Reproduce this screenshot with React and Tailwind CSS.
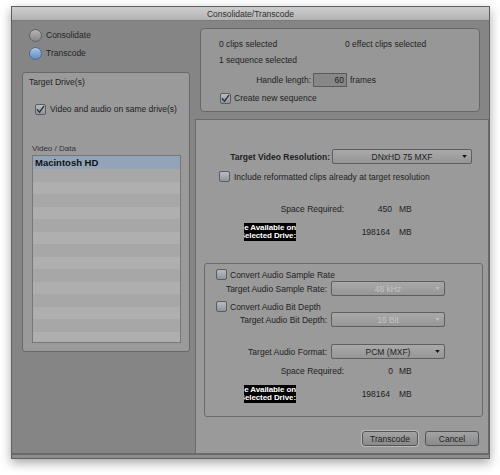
import React from 'react'

// ── Avid-style Consolidate/Transcode dialog ──
const FONT = { fontFamily: '"Liberation Sans", Arial, sans-serif' }

function Check({ checked }) {
  return (
    <div className="w-[11px] h-[11px] shrink-0 rounded-[2px] border border-[#5c5c5c] bg-gradient-to-b from-[#b8bcc4] to-[#8f949c] flex items-center justify-center">
      {checked && (
        <svg viewBox="0 0 10 10" className="w-[9px] h-[9px]">
          <path d="M1.5 5.2 L4 8 L8.6 1.6" fill="none" stroke="#2b3440" strokeWidth="1.6" strokeLinecap="round" strokeLinejoin="round" />
        </svg>
      )}
    </div>
  )
}

function Radio({ on, label }) {
  return (
    <div className="flex items-center h-[18px]">
      <div
        className={`w-[13px] h-[13px] rounded-full border ${
          on
            ? 'border-[#4a6a90] bg-gradient-to-b from-[#a9c6e6] to-[#5f8dc0]'
            : 'border-[#626262] bg-gradient-to-b from-[#b4b4b4] to-[#888888]'
        }`}
      />
      <span className="ml-[4px] text-[#262626]">{label}</span>
    </div>
  )
}

function Select({ value, width, disabled }) {
  return (
    <div className={`relative flex items-center justify-center h-[15px] rounded-[2px] border border-[#5e5e5e] bg-gradient-to-b from-[#a9a9a9] to-[#969696] ${width}`}>
      <span className={disabled ? 'text-[#c4c4c4]' : 'text-[#1e1e1e]'}>{value}</span>
      <svg viewBox="0 0 6 4" className="absolute right-[4px] top-[5px] w-[5px] h-[3px]">
        <path d="M0 0 H6 L3 4 Z" fill={disabled ? '#bdbdbd' : '#111'} />
      </svg>
    </div>
  )
}

// label that is too long for its black box, cut on the left like the original
function BlackLabel() {
  return (
    <div className="w-[52px] h-[18px] bg-black overflow-hidden flex flex-col items-end justify-center font-bold text-white leading-[8.5px] text-[8px] tracking-[-0.1px] whitespace-nowrap">
      <span>Space Available on</span>
      <span>Selected Drive:</span>
    </div>
  )
}

export default function App() {
  const rows = Array.from({ length: 14 })

  return (
    <div className="w-[500px] h-[475px] bg-white overflow-hidden" style={FONT}>
      <div className="ml-[11px] mt-[6px] w-[479px] h-[453px] flex flex-col border border-[#5f5f5f] bg-[#858585] text-[8.5px] leading-[10px] text-[#222] shadow-[0_4px_10px_rgba(0,0,0,0.35)]">

        {/* title bar */}
        <div className="h-[14px] shrink-0 flex items-center justify-center border-b border-[#7a7a7a] bg-gradient-to-b from-[#cdcdcd] to-[#b3b3b3] text-[#2f2f2f]">
          Consolidate/Transcode
        </div>

        <div className="flex flex-1 min-h-0">
          {/* left column */}
          <div className="w-[183px] shrink-0 flex flex-col">
            <div className="pl-[17px] pt-[5px]">
              <Radio label="Consolidate" />
              <Radio on label="Transcode" />
            </div>

            <div className="ml-[10px] mt-[10px] w-[168px] h-[280px] rounded-[3px] border border-[#686868] bg-[#9a9a9a]">
              <div className="pl-[6px] pt-[4px]">Target Drive(s)</div>
              <div className="mt-[16px] pl-[12px] flex items-center gap-[4px] h-[12px]">
                <Check checked />
                <span>Video and audio on same drive(s)</span>
              </div>
              <div className="mt-[29px] pl-[9px] text-[8px] text-[#333]">Video / Data</div>
              <div className="ml-[9px] mt-[1px] w-[149px] h-[188px] border border-[#777] overflow-hidden">
                <div className="h-[13px] bg-[#93a4b9] flex items-center pl-[2px] font-bold text-[9.5px] text-[#111]">
                  Macintosh HD
                </div>
                {rows.map((_, i) => (
                  <div key={i} className={`h-[12.5px] ${i % 2 === 0 ? 'bg-[#a7a7a7]' : 'bg-[#afafaf]'}`} />
                ))}
              </div>
            </div>
          </div>

          {/* right column */}
          <div className="flex-1 flex flex-col">
            <div className="ml-[5px] mt-[7px] w-[280px] h-[84px] shrink-0 rounded-[4px] border border-[#666] bg-[#979797]">
              <div className="pl-[18px] pt-[10px] flex">
                <span className="w-[126px]">0 clips selected</span>
                <span>0 effect clips selected</span>
              </div>
              <div className="pl-[18px] mt-[6px]">1 sequence selected</div>
              <div className="pl-[18px] mt-[8px] flex items-center">
                <span className="w-[92px] text-right">Handle length:</span>
                <div className="ml-[2px] w-[34px] h-[14px] border border-[#5a5a5a] bg-[#878787] flex items-center justify-end pr-[2px]">60</div>
                <span className="ml-[3px]">frames</span>
              </div>
              <div className="pl-[19px] mt-[5px] flex items-center gap-[3px] h-[12px]">
                <Check checked />
                <span>Create new sequence</span>
              </div>
            </div>

            {/* lower panel */}
            <div className="mt-[7px] flex-1 flex flex-col border-t border-l border-r border-[#6a6a6a] bg-[#9a9a9a]">
              <div className="mt-[29px] flex items-center">
                <span className="w-[134px] text-right font-bold">Target Video Resolution:</span>
                <div className="ml-[2px]"><Select value="DNxHD 75  MXF" width="w-[140px]" /></div>
              </div>
              <div className="mt-[7px] pl-[23px] flex items-center gap-[4px]">
                <Check />
                <span>Include reformatted clips already at target resolution</span>
              </div>
              <div className="mt-[22px] flex">
                <span className="w-[148px] text-right">Space Required:</span>
                <span className="w-[48px] text-right">450</span>
                <span className="ml-[7px]">MB</span>
              </div>
              <div className="mt-[9px] flex items-center">
                <div className="w-[100px] flex justify-end"><BlackLabel /></div>
                <span className="w-[94px] text-right">198164</span>
                <span className="ml-[9px]">MB</span>
              </div>

              {/* audio box */}
              <div className="ml-[8px] mt-[22px] w-[279px] h-[154px] rounded-[3px] border border-[#6a6a6a]">
                <div className="pt-[5px] pl-[11px] flex items-center gap-[3px]">
                  <Check />
                  <span>Convert Audio Sample Rate</span>
                </div>
                <div className="mt-[1px] flex items-center">
                  <span className="w-[122px] text-right">Target Audio Sample Rate:</span>
                  <div className="ml-[4px]"><Select value="48 kHz" width="w-[114px]" disabled /></div>
                </div>
                <div className="mt-[5px] pl-[11px] flex items-center gap-[3px]">
                  <Check />
                  <span>Convert Audio Bit Depth</span>
                </div>
                <div className="flex items-center">
                  <span className="w-[122px] text-right">Target Audio Bit Depth:</span>
                  <div className="ml-[4px]"><Select value="16 Bit" width="w-[114px]" disabled /></div>
                </div>
                <div className="mt-[17px] flex items-center">
                  <span className="w-[122px] text-right">Target Audio Format:</span>
                  <div className="ml-[4px]"><Select value="PCM  (MXF)" width="w-[114px]" /></div>
                </div>
                <div className="mt-[7px] flex">
                  <span className="w-[139px] text-right">Space Required:</span>
                  <span className="w-[49px] text-right">0</span>
                  <span className="ml-[6px]">MB</span>
                </div>
                <div className="mt-[9px] flex items-center">
                  <div className="w-[91px] flex justify-end"><BlackLabel /></div>
                  <span className="w-[94px] text-right">198164</span>
                  <span className="ml-[9px]">MB</span>
                </div>
              </div>

              <div className="mt-[13px] pr-[9px] flex justify-end items-center gap-[6px]">
                <div className="rounded-[4px] p-[1px] bg-[#b9b9b9]">
                  <div className="w-[56px] h-[15px] rounded-[3px] border border-[#555] bg-gradient-to-b from-[#a3a3a3] to-[#8a8a8a] flex items-center justify-center">Transcode</div>
                </div>
                <div className="w-[54px] h-[15px] rounded-[3px] border border-[#555] bg-gradient-to-b from-[#a3a3a3] to-[#8a8a8a] flex items-center justify-center">Cancel</div>
              </div>
            </div>
          </div>
        </div>

        {/* bottom strip */}
        <div className="h-[5px] shrink-0 border-t-2 border-[#6a6a6a] bg-[#8d8d8d]" />
      </div>
    </div>
  )
}
